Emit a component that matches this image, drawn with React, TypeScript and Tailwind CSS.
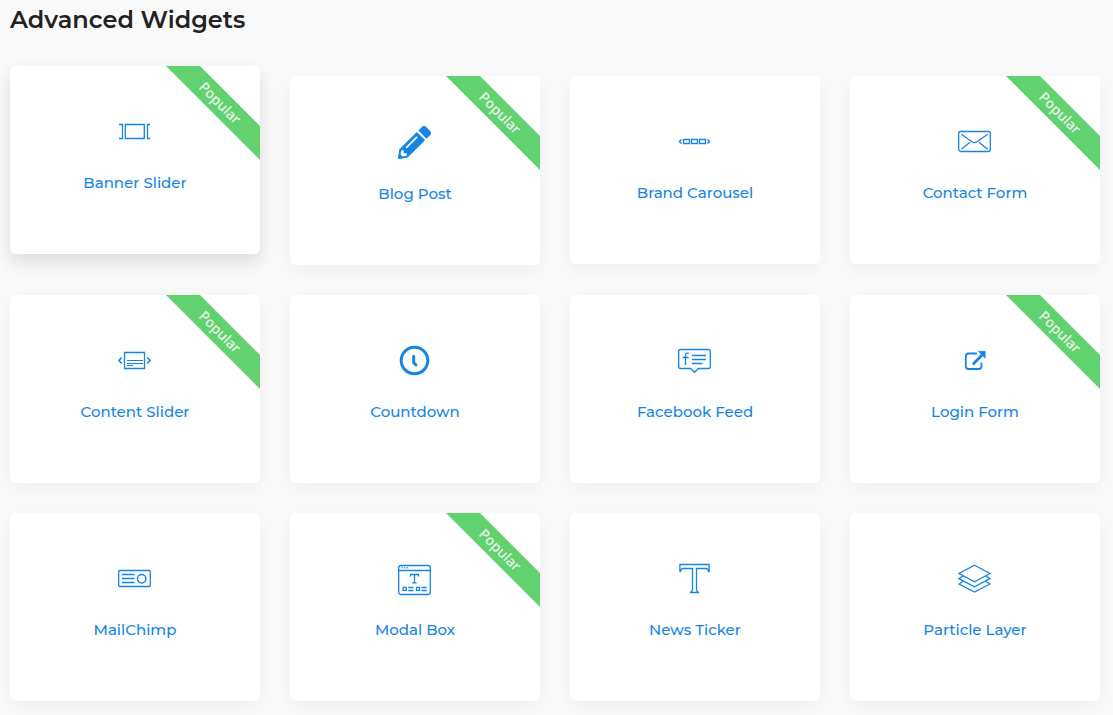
import React from 'react';
import clsx from 'clsx';
import { FaPencilAlt } from 'react-icons/fa';

interface Widget {
  name: string;
  icon: React.ReactNode;
  popular?: boolean;
  raised?: boolean;
}

function LineIcon({ children }: { children: React.ReactNode }) {
  return (
    <svg
      className="h-[34px] w-[34px]"
      viewBox="0 0 34 34"
      fill="none"
      stroke="currentColor"
      strokeWidth="1.3"
      aria-hidden="true"
    >
      {children}
    </svg>
  );
}

const widgets: Widget[] = [
  {
    name: 'Banner Slider',
    popular: true,
    raised: true,
    icon: (
      <LineIcon>
        <path d="M1 9.5H4.5V23.5H1M32 9.5H29.5V23.5H32" />
        <path d="M7.3 9.5H26.3V23.5H7.3Z" />
      </LineIcon>
    ),
  },
  {
    name: 'Blog Post',
    popular: true,
    icon: <FaPencilAlt className="h-[35px] w-[34px] pr-px" aria-hidden="true" />,
  },
  {
    name: 'Brand Carousel',
    icon: (
      <LineIcon>
        <path d="M5.5 14.5h6v4h-6zM13.5 14.5h6v4h-6zM21.5 14.5h6v4h-6z" strokeWidth="1.3" />
        <path d="M3.5 14.5L1.5 16.5L3.5 18.5M29.5 14.5L31.5 16.5L29.5 18.5" strokeWidth="1.5" />
      </LineIcon>
    ),
  },
  {
    name: 'Contact Form',
    popular: true,
    icon: (
      <LineIcon>
        <rect x="0.7" y="6.5" width="31.6" height="20" rx="2" />
        <path d="M3.3 9.3L14 16.8Q16.5 18.6 19 16.8L29.7 9.3M3.3 24.3L12 17.3M29.7 24.3L21 17.3" />
      </LineIcon>
    ),
  },
  {
    name: 'Content Slider',
    popular: true,
    icon: (
      <LineIcon>
        <path d="M6.5 8.5H26.5V24.5H6.5Z" />
        <path d="M9 16.5H25M9 19.5H25M9 21.5H15" strokeWidth="1" />
        <path d="M3.8 13.5L0.8 16.5L3.8 19.5M29.2 13.5L32.2 16.5L29.2 19.5" strokeWidth="1.5" />
      </LineIcon>
    ),
  },
  {
    name: 'Countdown',
    icon: (
      <LineIcon>
        <circle cx="16.5" cy="16.5" r="13.3" strokeWidth="3" />
        <path d="M15.7 12.2V18.8L18 20.8" strokeWidth="3" strokeLinecap="round" strokeLinejoin="round" />
      </LineIcon>
    ),
  },
  {
    name: 'Facebook Feed',
    icon: (
      <LineIcon>
        <path d="M12.5 24.5H2.7Q0.7 24.5 0.7 22.5V7.5Q0.7 5.5 2.7 5.5H30.3Q32.3 5.5 32.3 7.5V22.5Q32.3 24.5 30.3 24.5H20.5L16.5 28.3Z" />
        <path d="M10.8 9.4Q7.5 8.4 7.5 11.5V21M4.6 13.5H10.6" />
        <path d="M14 11.5H28M14 15.5H28M14 19.5H24.5" />
      </LineIcon>
    ),
  },
  {
    name: 'Login Form',
    popular: true,
    icon: (
      <LineIcon>
        <path d="M19 9.5H10.5Q7.8 9.5 7.8 12.2V22.3Q7.8 25 10.5 25H20.8Q23.5 25 23.5 22.3V18.5" strokeWidth="1.8" />
        <path d="M15.7 19.5L25 10" strokeWidth="2.8" strokeLinecap="round" />
        <path d="M20.3 7.3H27.2V14.2Z" fill="currentColor" strokeWidth="0.6" strokeLinejoin="round" />
      </LineIcon>
    ),
  },
  {
    name: 'MailChimp',
    icon: (
      <LineIcon>
        <rect x="0.7" y="8.5" width="31.6" height="16" rx="1" />
        <path d="M4 12.5H16.5M4 16.5H16.5M4 20.5H16.5" />
        <circle cx="23.7" cy="16.7" r="4.2" strokeWidth="1.5" />
      </LineIcon>
    ),
  },
  {
    name: 'Modal Box',
    popular: true,
    icon: (
      <LineIcon>
        <rect x="0.7" y="3.5" width="31.6" height="29" rx="2.5" />
        <path d="M0.7 8.5H32.3" />
        <path d="M3.5 5.8H10.5" strokeWidth="1" strokeDasharray="1.5 1" />
        <path d="M12.5 14.5V12.5H20.5V14.5M16.5 12.5V20.8M14.3 20.8H18.7" />
        <path d="M5.2 25.3h3v3h-3zM18.5 25.3h3v3h-3z" />
        <path d="M10.3 25.5H15.5M10.3 28.5H15.5M23.5 25.5H28.7M23.5 28.5H28.7" />
      </LineIcon>
    ),
  },
  {
    name: 'News Ticker',
    icon: (
      <LineIcon>
        <path d="M2.5 9.5H1.9V2.5H31.1V9.5H30.5Q30 6.5 28 6.5H18.5V27.5Q18.5 29.5 21 30.5H12Q14.5 29.5 14.5 27.5V6.5H5Q3 6.5 2.5 9.5Z" />
      </LineIcon>
    ),
  },
  {
    name: 'Particle Layer',
    icon: (
      <LineIcon>
        <path d="M16.5 3.3L32 11.5L16.5 19.7L1 11.5Z" />
        <path d="M5.3 13.8L1 16.7L16.5 24.8L32 16.7L27.7 13.8" />
        <path d="M5.3 19.2L1 22L16.5 30.1L32 22L27.7 19.2" />
      </LineIcon>
    ),
  },
];

function WidgetCard({ name, icon, popular, raised }: Widget) {
  return (
    <a
      href="#"
      className={clsx(
        'relative flex flex-col items-center overflow-hidden rounded-md bg-white pt-[49px] pb-[59px] text-[#1485e5]',
        raised
          ? '-translate-y-2.5 shadow-[0_8px_18px_rgba(0,0,0,0.13)]'
          : 'shadow-[0_5px_20px_rgba(0,0,0,0.05)]'
      )}
    >
      {popular && (
        <span className="absolute top-[25px] -right-10 h-6 w-40 rotate-45 bg-[#62d16f] text-center font-['Noto_Sans',sans-serif] text-sm leading-6 font-medium text-white/85">
          Popular
        </span>
      )}
      {icon}
      <span className="mt-[22px] text-[15px] leading-6 font-medium">{name}</span>
    </a>
  );
}

export default function App() {
  return (
    <main className="min-h-screen bg-[#fafafa] pr-[13px] pb-3.5 pl-2.5 font-[Montserrat,Inter,sans-serif]">
      <h2 className="mb-9 pt-0.5 pb-0.5 text-2xl leading-9 font-semibold text-[#222]">Advanced Widgets</h2>
      <div className="grid grid-cols-4 items-start gap-[30px]">
        {widgets.map((widget) => (
          <WidgetCard key={widget.name} {...widget} />
        ))}
      </div>
    </main>
  );
}
